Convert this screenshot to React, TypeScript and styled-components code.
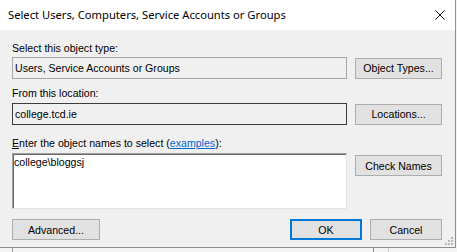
import React from 'react';
import styled, { createGlobalStyle } from 'styled-components';

const GlobalStyle = createGlobalStyle`
  html, body {
    margin: 0;
    padding: 0;
    background: #f4f4f4;
  }
  * {
    box-sizing: border-box;
  }
`;

// the desktop behind the dialog (only a thin strip shows)
const Desktop = styled.div`
  position: relative;
  width: 457px;
  height: 252px;
  overflow: hidden;
  background: #f4f4f4;
`;

const BackLine = styled.div<{ x: number; color: string }>`
  position: absolute;
  top: 248px;
  left: ${p => p.x}px;
  width: 1px;
  height: 4px;
  background: ${p => p.color};
`;

const Window = styled.div`
  position: relative;
  width: 456px;
  height: 248px;
  background: #f0f0f0;
  border-right: 1px solid #8e8e8e;
  border-bottom: 1px solid #8e8e8e;
  display: flex;
  flex-direction: column;
  font-family: "Liberation Sans", Arial, sans-serif;
  font-size: 10.6px;
  color: #000;
`;

const TitleBar = styled.div`
  height: 30px;
  flex: none;
  background: #fff;
  display: flex;
  align-items: center;
  justify-content: space-between;
  padding: 0 10px 0 8px;
`;

const Title = styled.span`
  font-family: "Noto Sans", "Open Sans", sans-serif;
  font-size: 11.2px;
  color: #000;
  margin-top: -1px;
`;

const CloseIcon = styled.svg`
  width: 10px;
  height: 10px;
  display: block;
  margin-top: -1px;
`;

const Body = styled.div`
  flex: 1;
  display: flex;
  flex-direction: column;
  padding: 12px 13px 0 12px;
`;

const Label = styled.div<{ gap: number }>`
  line-height: 13px;
  margin-top: ${p => p.gap}px;
  white-space: nowrap;
`;

const Key = styled.span`
  text-decoration: underline;
`;

const Link = styled.a`
  color: #0066cc;
  text-decoration: underline;
  cursor: pointer;
`;

const Row = styled.div<{ gap: number; top?: boolean }>`
  display: flex;
  align-items: ${p => (p.top ? 'flex-start' : 'center')};
  gap: 8px;
  margin-top: ${p => p.gap}px;
`;

const Field = styled.div<{ dark?: boolean }>`
  flex: 1;
  height: 22px;
  line-height: 20px;
  padding-left: 2px;
  background: #f0f0f0;
  border: 1px solid ${p => (p.dark ? '#3c3c3c' : '#a8a8a8')};
  white-space: nowrap;
  overflow: hidden;
`;

const NamesBox = styled.div`
  flex: 1;
  height: 56px;
  padding: 2px 1px;
  line-height: 13px;
  background: #fff;
  border-style: solid;
  border-width: 1px;
  border-color: #a0a0a0 #e3e3e3 #e3e3e3 #a0a0a0;
  box-shadow: inset 1px 1px 0 #696969;
`;

const Button = styled.div<{ w?: number; primary?: boolean; nudge?: number }>`
  flex: none;
  width: ${p => p.w ?? 87}px;
  height: 21px;
  margin-top: ${p => p.nudge ?? 0}px;
  background: #e1e1e1;
  border: ${p => (p.primary ? '2px solid #0078d7' : '1px solid #adadad')};
  display: flex;
  align-items: center;
  justify-content: center;
  white-space: nowrap;
  cursor: default;
`;

const Footer = styled.div`
  display: flex;
  align-items: center;
  gap: 8px;
  margin-top: 10px;
`;

const Spacer = styled.div`
  flex: 1;
`;

const Grip = styled.svg`
  position: absolute;
  right: 2px;
  bottom: 2px;
  width: 8px;
  height: 8px;
`;

const gripDots = [
  [6, 0], [6, 3], [3, 3], [6, 6], [3, 6], [0, 6],
];

export default function App() {
  return (
    <Desktop>
      <GlobalStyle />
      <Window>
        <TitleBar>
          <Title>Select Users, Computers, Service Accounts or Groups</Title>
          <CloseIcon viewBox="0 0 10 10">
            <path d="M0.5 0.5 L9.5 9.5 M9.5 0.5 L0.5 9.5" stroke="#111" strokeWidth="1" fill="none" />
          </CloseIcon>
        </TitleBar>
        <Body>
          <Label gap={0}>Select this object type:</Label>
          <Row gap={2}>
            <Field>Users, Service Accounts or Groups</Field>
            <Button>Object Types...</Button>
          </Row>

          <Label gap={8}>From this location:</Label>
          <Row gap={3}>
            <Field dark>college.tcd.ie</Field>
            <Button>Locations...</Button>
          </Row>

          <Label gap={12}>
            <Key>E</Key>nter the object names to select (<Link>examples</Link>):
          </Label>
          <Row gap={3} top>
            <NamesBox>college\bloggsj</NamesBox>
            <Button nudge={2}>Check Names</Button>
          </Row>

          <Footer>
            <Button w={88}>Advanced...</Button>
            <Spacer />
            <Button w={72} primary>OK</Button>
            <Button w={72}>Cancel</Button>
          </Footer>
        </Body>
        <Grip viewBox="0 0 8 8">
          {gripDots.map(([x, y]) => (
            <rect key={`${x}-${y}`} x={x} y={y} width="2" height="2" fill="#b8b8b8" />
          ))}
        </Grip>
      </Window>
      <BackLine x={12} color="#9a9a9a" />
      <BackLine x={373} color="#8a8a8a" />
      <BackLine x={388} color="#c8c8c8" />
    </Desktop>
  );
}
